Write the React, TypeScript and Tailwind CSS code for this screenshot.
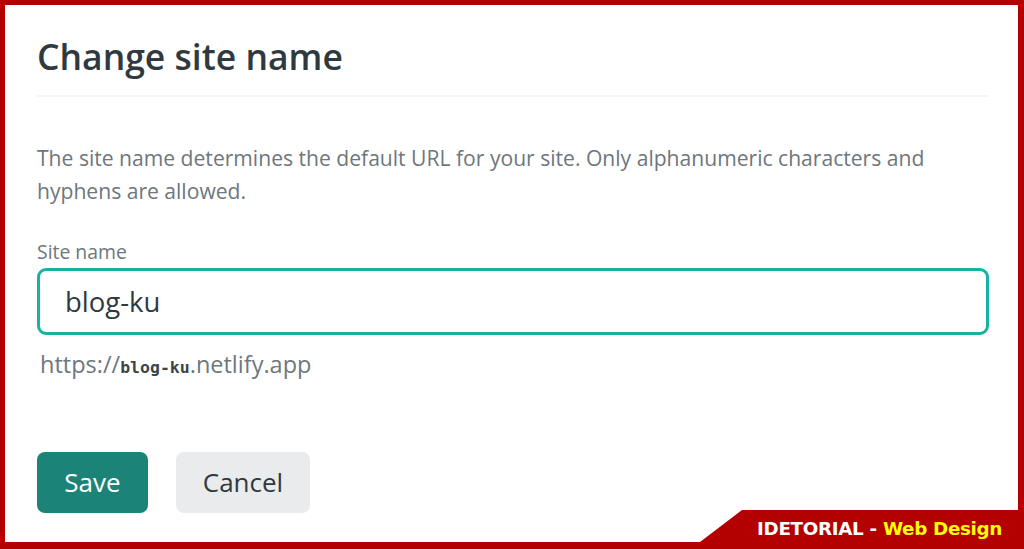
import React from "react";

const sans = "font-['Open_Sans','Noto_Sans',sans-serif]";

export default function App() {
  return (
    <div className={`relative w-[1024px] h-[549px] overflow-hidden bg-white border-[#b30000] border-t-[5px] border-l-[5px] border-r-[6px] border-b-[7px] ${sans}`}>
      <div className="pl-[32px] pr-[29px]">
        {/* Header */}
        <div className="pt-[29px] pb-[17px] border-b-2 border-[#f5f6f6]">
          <h1 className="text-[35.5px] leading-[44px] font-semibold text-[#2f3a40]">Change site name</h1>
        </div>

        <p className="mt-[44px] text-[21.1px] leading-[33px] text-[#6e777c]">
          The site name determines the default URL for your site. Only alphanumeric characters and hyphens are allowed.
        </p>

        {/* Field */}
        <label className="block mt-[33px] text-[19.4px] leading-[24px] text-[#6e777c]">Site name</label>
        <div className="mt-[4px] h-[67px] rounded-[9px] border-[3px] border-[#16b3a1] flex items-center pl-[25px]">
          <span className="text-[27.5px] text-[#2f3a40]">blog-ku</span>
        </div>
        <div className="mt-[14px] pl-[3px] text-[23.5px] leading-[30px] text-[#6e777c]">
          https://<span className="font-['DejaVu_Sans_Mono',monospace] font-bold text-[16.5px] text-[#3c4549]">blog-ku</span>.netlify.app
        </div>

        {/* Actions */}
        <div className="mt-[69px] flex gap-[28px]">
          <button className="h-[61px] w-[111px] rounded-[8px] bg-[#1b8377] text-white text-[26px]">Save</button>
          <button className="h-[61px] w-[134px] rounded-[8px] bg-[#e9ebed] text-[#2f3a40] text-[26px]">Cancel</button>
        </div>
      </div>

      {/* Watermark band */}
      <div className="absolute right-0 bottom-0 w-[318px] h-[32px] bg-[#b30000] [clip-path:polygon(42px_0,100%_0,100%_100%,0_100%)] flex items-center pt-[6px] pl-[57px] font-['DejaVu_Sans',sans-serif] font-bold text-[18.3px] tracking-[-0.3px]">
        <span className="text-white">IDETORIAL -&nbsp;</span>
        <span className="text-[#ffff00]">Web Design</span>
      </div>
    </div>
  );
}
